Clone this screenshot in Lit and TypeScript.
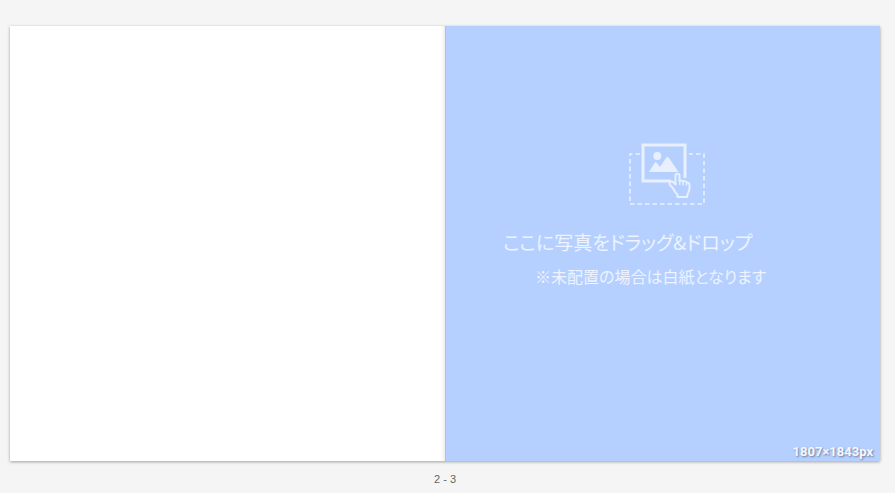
import { LitElement, html, css } from "lit";
import { customElement, property } from "lit/decorators.js";

@customElement("photo-drop-icon")
class PhotoDropIcon extends LitElement {
  static styles = css`
    :host { display: block; width: 76px; height: 63px; }
    .icon { display: block; width: 100%; height: 100%; }
  `;

  render() {
    return html`
      <svg class="icon" viewBox="0 0 76 63" fill="none" stroke="#e8f0ff" aria-hidden="true">
        <path d="M11 11H1V61H75V11H60" stroke-width="1.6" stroke-dasharray="4.500 3" />
        <path d="M42 38H14V2H56V35" stroke-width="3" />
        <circle cx="28.300" cy="13" r="4" fill="#e8f0ff" stroke="none" />
        <path d="M20 29L25.500 20Q26.500 18.500 28 20L31 24L37 15Q38.500 13 40 15L49.500 29Z" fill="#e8f0ff" stroke="none" />
        <path d="M48.500 54V51.500C45.500 49.500 45 46 43 44C41 42.500 40.500 41.500 40.500 40.500C40.500 38.500 43 38 44.500 39.500L46.500 41.500V32.500C46.500 30 50.500 30 50.500 32.500V38C52 37 53.500 37.500 54 38.500C55.500 37.500 57 38.200 57.500 39.500C59.500 39 60.500 40.500 60.500 42V45C60.500 48 59 49.500 58.500 51.500L58 54Z" fill="#b5d0ff" stroke-width="2" stroke-linejoin="round" />
        <path d="M50.800 38V42M54.100 39V42.500M57.500 40V42.500" stroke-width="1.400" />
      </svg>
    `;
  }
}

@customElement("app-root")
class AppRoot extends LitElement {
  @property() pages = "2 - 3";
  @property() size = "1807×1843px";

  static styles = css`
    :host {
      display: block;
      min-height: 100vh;
      box-sizing: border-box;
      padding: 26px 15px 0 10px;
      background: #f5f5f5;
      font-family: "Liberation Sans", "Noto Sans CJK JP", sans-serif;
    }
    .spread {
      display: grid;
      grid-template-columns: 1fr 1fr;
      box-shadow: 0 1px 3px rgba(0, 0, 0, 0.35);
    }
    .page {
      aspect-ratio: 1;
      box-sizing: border-box;
    }
    .blank {
      background: linear-gradient(to left, #ededed, #ffffff 4px);
    }
    .drop {
      display: flex;
      flex-direction: column;
      padding: 117px 7px 0 57px;
      border-left: 1px solid #a6c2f0;
      background: #b5d0ff;
      color: #edf3ff;
      font-family: "Noto Sans CJK JP", sans-serif;
      font-feature-settings: "palt";
      white-space: nowrap;
    }
    .icon { margin-left: 126px; }
    .title, .note { margin: 0; font-weight: 400; }
    .title { margin-top: 20px; font-size: 19px; line-height: 32px; }
    .note { padding-left: 32px; margin-top: 4px; font-size: 16px; line-height: 28px; }
    .size {
      margin: auto 0 0;
      align-self: flex-end;
      font: bold 13px/18px Roboto, sans-serif;
      color: #f5f8ff;
      text-shadow: 1px 1px 2px rgba(0, 0, 0, 0.4);
    }
    .number {
      margin: 10px 0 0;
      font-size: 11px;
      line-height: 16px;
      text-align: center;
      color: #666666;
    }
  `;

  render() {
    return html`
      <main>
        <div class="spread">
          <section class="page blank"></section>
          <section class="page drop">
            <photo-drop-icon class="icon"></photo-drop-icon>
            <h1 class="title">ここに写真をドラッグ&amp;ドロップ</h1>
            <p class="note">※未配置の場合は白紙となります</p>
            <p class="size">${this.size}</p>
          </section>
        </div>
        <p class="number">${this.pages}</p>
      </main>
    `;
  }
}
